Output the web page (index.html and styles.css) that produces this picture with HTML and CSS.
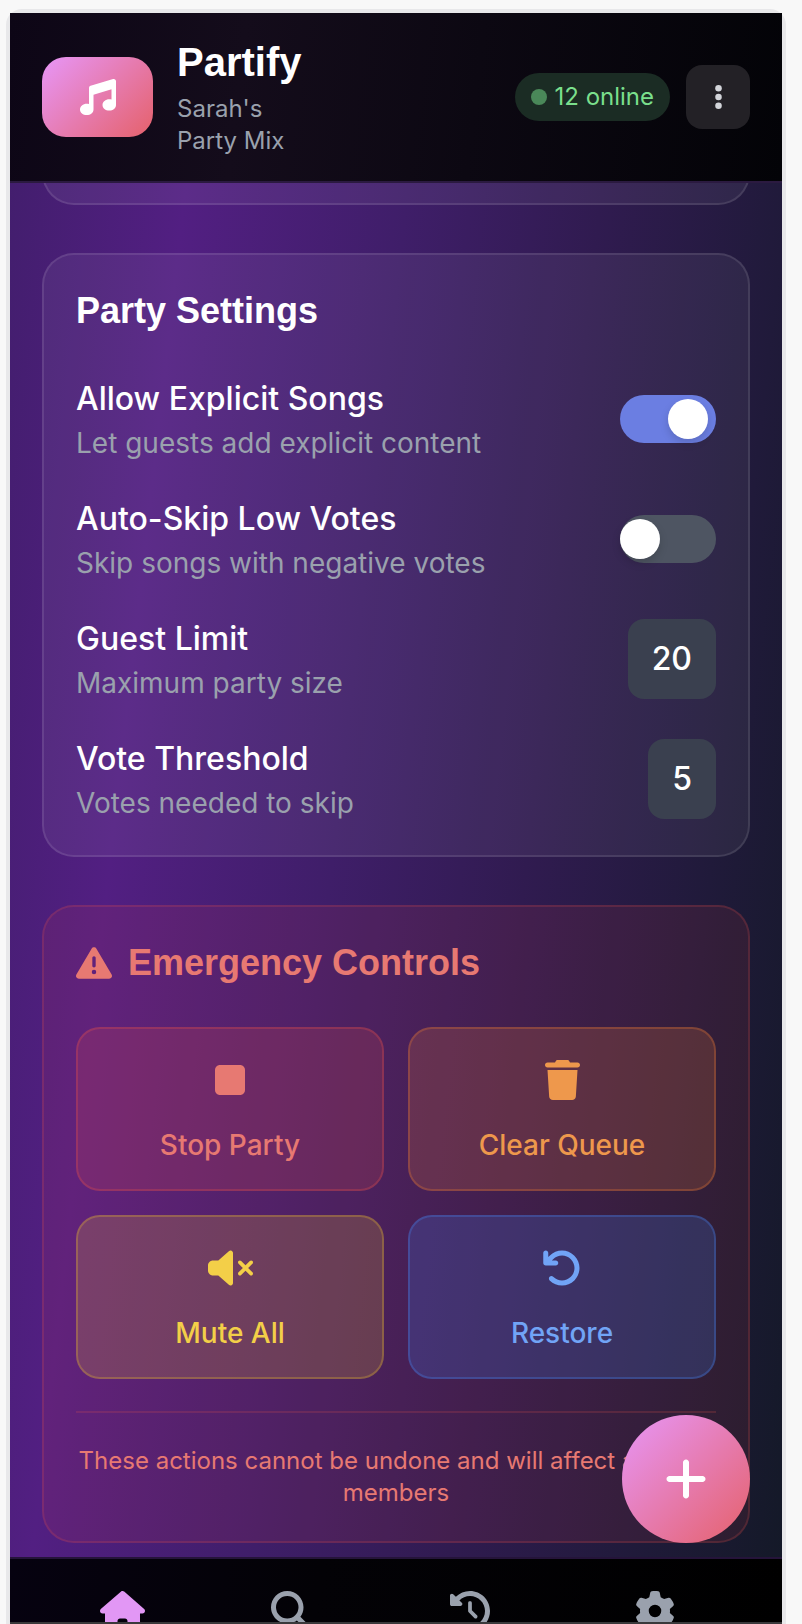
FILE: index.html
```html
<!DOCTYPE html>
<html lang="en">
<head>
<meta charset="utf-8">
<meta name="viewport" content="width=device-width, initial-scale=1">
<title>Partify</title>
<link rel="stylesheet" href="styles.css">
</head>
<body>
<div class="device">
  <div class="screen">
    <header class="header">
      <div class="logo">
        <svg class="icon-36" viewBox="0 0 512 512" aria-hidden="true"><path d="M499.100 6.300c8.100 6 12.900 15.600 12.900 25.700v72V368c0 44.200-43 80-96 80s-96-35.800-96-80s43-80 96-80c11.200 0 22 1.600 32 4.600V147L192 223.800V432c0 44.200-43 80-96 80s-96-35.800-96-80s43-80 96-80c11.200 0 22 1.600 32 4.600V200 128c0-14.100 9.300-26.600 22.800-30.700l320-96c9.700-2.900 20.200-1.100 28.300 5z"/></svg>
      </div>
      <div class="brand">
        <h1 class="brand-name">Partify</h1>
        <p class="brand-party">Sarah's Party Mix</p>
      </div>
      <div class="header-actions">
        <div class="online"><span class="online-dot"></span>12 online</div>
        <button class="menu-button" type="button" aria-label="More options">
          <svg class="icon-28" viewBox="0 0 128 512" aria-hidden="true"><circle cx="64" cy="96" r="60"/><circle cx="64" cy="256" r="60"/><circle cx="64" cy="416" r="60"/></svg>
        </button>
      </div>
    </header>

    <main class="content">
      <section class="card card-previous"></section>

      <section class="card">
        <h2 class="card-title">Party Settings</h2>
        <div class="settings">
          <div class="setting">
            <label class="setting-text" for="explicit"><span class="setting-name">Allow Explicit Songs</span><span class="setting-note">Let guests add explicit content</span></label>
            <input class="toggle" id="explicit" type="checkbox" checked>
          </div>
          <div class="setting">
            <label class="setting-text" for="autoskip"><span class="setting-name">Auto-Skip Low Votes</span><span class="setting-note">Skip songs with negative votes</span></label>
            <input class="toggle" id="autoskip" type="checkbox">
          </div>
          <div class="setting">
            <label class="setting-text" for="limit"><span class="setting-name">Guest Limit</span><span class="setting-note">Maximum party size</span></label>
            <button class="value" id="limit" type="button">20</button>
          </div>
          <div class="setting">
            <label class="setting-text" for="threshold"><span class="setting-name">Vote Threshold</span><span class="setting-note">Votes needed to skip</span></label>
            <button class="value" id="threshold" type="button">5</button>
          </div>
        </div>
      </section>

      <section class="card card-danger">
        <h2 class="card-title">
          <svg class="icon-36" viewBox="0 0 512 512" aria-hidden="true"><path d="M256 32c14.200 0 27.300 7.500 34.500 19.800l216 368c7.300 12.400 7.300 27.700 .2 40.100S486.300 480 472 480H40c-14.300 0-27.600-7.700-34.700-20.100s-7-27.800 .2-40.100l216-368C228.700 39.500 241.800 32 256 32zm0 128c-13.300 0-24 10.700-24 24V296c0 13.300 10.700 24 24 24s24-10.700 24-24V184c0-13.300-10.700-24-24-24zm32 224a32 32 0 1 0 -64 0 32 32 0 1 0 64 0z"/></svg>
          Emergency Controls
        </h2>
        <div class="actions">
          <button class="action action-stop" type="button">
            <span class="action-icon"><svg class="icon-40" viewBox="0 0 384 512" aria-hidden="true"><path d="M0 128C0 92.700 28.700 64 64 64H320c35.300 0 64 28.700 64 64V384c0 35.300-28.700 64-64 64H64c-35.300 0-64-28.700-64-64V128z"/></svg></span>
            Stop Party
          </button>
          <button class="action action-clear" type="button">
            <span class="action-icon"><svg class="icon-40" viewBox="0 0 448 512" aria-hidden="true"><path d="M135.200 17.700C140.600 6.800 151.700 0 163.800 0H284.200c12.100 0 23.200 6.800 28.600 17.700L320 32h96c17.700 0 32 14.300 32 32s-14.300 32-32 32H32C14.300 96 0 81.700 0 64S14.300 32 32 32h96l7.200-14.300zM32 128H416L394.800 467c-1.600 25.300-22.600 45-47.900 45H101.100c-25.300 0-46.300-19.700-47.900-45L32 128z"/></svg></span>
            Clear Queue
          </button>
          <button class="action action-mute" type="button">
            <span class="action-icon"><svg class="icon-40" viewBox="0 0 576 512" aria-hidden="true"><path d="M301.100 34.800C312.600 40 320 51.400 320 64V448c0 12.600-7.400 24-18.900 29.200s-25 3.100-34.400-5.300L131.800 352H64c-35.300 0-64-28.700-64-64V224c0-35.300 28.700-64 64-64h67.800L266.700 40.100c9.400-8.400 22.900-10.400 34.400-5.300zM425 167l55 55 55-55c9.400-9.400 24.600-9.400 33.900 0s9.400 24.600 0 33.900l-55 55 55 55c9.400 9.400 9.400 24.600 0 33.900s-24.600 9.400-33.900 0l-55-55-55 55c-9.400 9.400-24.600 9.400-33.900 0s-9.400-24.600 0-33.900l55-55-55-55c-9.400-9.400-9.400-24.600 0-33.900s24.600-9.400 33.900 0z"/></svg></span>
            Mute All
          </button>
          <button class="action action-restore" type="button">
            <span class="action-icon"><svg class="icon-40" viewBox="0 0 512 512" aria-hidden="true"><path d="M125.700 160H176c17.700 0 32 14.300 32 32s-14.300 32-32 32H48c-17.700 0-32-14.300-32-32V64c0-17.700 14.300-32 32-32s32 14.300 32 32v51.200L97.600 97.600c87.500-87.500 229.300-87.500 316.800 0s87.500 229.300 0 316.800s-229.300 87.500-316.800 0c-12.500-12.500-12.500-32.800 0-45.300s32.800-12.500 45.300 0c62.500 62.500 163.800 62.500 226.300 0s62.500-163.800 0-226.300s-163.800-62.500-226.300 0L125.700 160z"/></svg></span>
            Restore
          </button>
        </div>
        <p class="warning">These actions cannot be undone and will affect all party members</p>
      </section>
    </main>

    <button class="fab" type="button" aria-label="Add song">
      <svg class="icon-48" viewBox="0 0 448 512" aria-hidden="true"><path d="M256 80c0-17.700-14.300-32-32-32s-32 14.300-32 32V224H48c-17.700 0-32 14.300-32 32s14.300 32 32 32H192V432c0 17.700 14.300 32 32 32s32-14.300 32-32V288H400c17.700 0 32-14.300 32-32s-14.300-32-32-32H256V80z"/></svg>
    </button>

    <nav class="nav" aria-label="Main">
      <a class="nav-link nav-link-active" href="#home" aria-label="Home"><svg class="icon-40" viewBox="0 0 576 512" aria-hidden="true"><path d="M575.800 255.500c0 18-15 32.100-32 32.100h-32l.7 160.200c0 2.700-.2 5.400-.5 8.100V472c0 22.100-17.900 40-40 40H456c-1.100 0-2.200 0-3.300-.1c-1.400 .1-2.800 .1-4.200 .1H416 392c-22.100 0-40-17.900-40-40V448 384c0-17.700-14.300-32-32-32H256c-17.700 0-32 14.300-32 32v64 24c0 22.100-17.900 40-40 40H160 128.100c-1.500 0-3-.1-4.500-.2c-1.200 .1-2.400 .2-3.600 .2H104c-22.100 0-40-17.900-40-40V360c0-.9 0-1.900 .1-2.800V287.600H32c-18 0-32-14-32-32.100c0-9 3-17 10-24L266.400 8c7-7 15-8 22-8s15 2 21 7L564.800 231.500c8 7 12 15 11 24z"/></svg></a>
      <a class="nav-link" href="#search" aria-label="Search"><svg class="icon-40" viewBox="0 0 512 512" aria-hidden="true"><path d="M416 208c0 45.900-14.900 88.300-40 122.700L502.600 457.400c12.500 12.500 12.500 32.800 0 45.300s-32.800 12.500-45.300 0L330.700 376c-34.400 25.200-76.800 40-122.700 40C93.100 416 0 322.900 0 208S93.100 0 208 0S416 93.100 416 208zM208 352a144 144 0 1 0 0-288 144 144 0 1 0 0 288z"/></svg></a>
      <a class="nav-link" href="#history" aria-label="History"><svg class="icon-40" viewBox="0 0 512 512" aria-hidden="true"><path d="M75 75L41 41C25.900 25.900 0 36.600 0 57.900V168c0 13.300 10.700 24 24 24H134.100c21.400 0 32.100-25.900 17-41l-30.800-30.800C155 85.500 203 64 256 64c106 0 192 86 192 192s-86 192-192 192c-40.800 0-78.600-12.700-109.700-34.400c-14.500-10.100-34.400-6.600-44.600 7.900s-6.600 34.400 7.900 44.600C151.200 495 201.700 512 256 512c141.400 0 256-114.600 256-256S397.400 0 256 0C185.300 0 121.300 28.700 75 75zm181 53c-13.300 0-24 10.700-24 24V256c0 6.400 2.500 12.500 7 17l72 72c9.400 9.400 24.600 9.400 33.900 0s9.400-24.600 0-33.900l-65-65V152c0-13.300-10.700-24-24-24z"/></svg></a>
      <a class="nav-link" href="#settings" aria-label="Settings"><svg class="icon-40" viewBox="0 0 512 512" aria-hidden="true"><path d="M495.900 166.600c3.200 8.700 .5 18.400-6.400 24.600l-43.300 39.400c1.100 8.300 1.700 16.800 1.700 25.400s-.6 17.100-1.700 25.400l43.300 39.400c6.900 6.200 9.600 15.900 6.400 24.600c-4.400 11.900-9.700 23.300-15.800 34.300l-4.700 8.100c-6.600 11-14 21.400-22.100 31.200c-5.900 7.200-15.700 9.600-24.500 6.800l-55.700-17.700c-13.400 10.300-28.200 18.900-44 25.400l-12.500 57.100c-2 9.100-9 16.300-18.200 17.800c-13.800 2.300-28 3.500-42.500 3.500s-28.700-1.200-42.500-3.500c-9.200-1.500-16.200-8.700-18.200-17.800l-12.500-57.100c-15.800-6.500-30.600-15.100-44-25.400L83.100 425.900c-8.800 2.800-18.600 .3-24.500-6.800c-8.100-9.800-15.500-20.200-22.100-31.200l-4.700-8.100c-6.100-11-11.400-22.400-15.800-34.300c-3.200-8.700-.5-18.400 6.400-24.600l43.300-39.400C64.600 273.100 64 264.600 64 256s.6-17.100 1.700-25.400L22.400 191.200c-6.900-6.200-9.600-15.900-6.400-24.600c4.400-11.900 9.700-23.300 15.800-34.300l4.700-8.100c6.600-11 14-21.400 22.100-31.200c5.900-7.200 15.700-9.600 24.500-6.800l55.700 17.700c13.400-10.300 28.200-18.900 44-25.400l12.500-57.100c2-9.100 9-16.300 18.200-17.800C227.300 1.200 241.500 0 256 0s28.700 1.200 42.500 3.500c9.200 1.500 16.200 8.700 18.200 17.800l12.500 57.100c15.800 6.500 30.600 15.100 44 25.400l55.700-17.700c8.800-2.800 18.600-.3 24.500 6.800c8.100 9.800 15.500 20.200 22.100 31.200l4.700 8.100c6.100 11 11.400 22.400 15.800 34.300zM256 336a80 80 0 1 0 0-160 80 80 0 1 0 0 160z"/></svg></a>
    </nav>
  </div>
</div>
</body>
</html>
```

FILE: styles.css
```css
* { box-sizing: border-box; }

body {
  margin: 0;
  background: #f8f8f8;
  color: #fff;
  font-family: Inter, "Liberation Sans", sans-serif;
  font-size: 24px;
  line-height: 32px;
}

h1, h2, p { margin: 0; }
h1, h2 { font-family: "Liberation Sans", Arial, sans-serif; font-weight: 700; }
button { font-family: inherit; color: inherit; cursor: pointer; }
svg { display: block; fill: currentColor; }

.icon-28 { height: 28px; }
.icon-36 { height: 36px; }
.icon-40 { height: 40px; }
.icon-48 { height: 48px; }

.device {
  height: 100vh;
  padding: 9px 16px 0 6px;
  overflow: hidden;
  display: flex;
}

.screen {
  position: relative;
  flex: 1;
  min-width: 0;
  display: flex;
  flex-direction: column;
  border: 4px solid #e8e8ea;
  border-bottom: 0;
  border-radius: 16px 16px 0 0;
}

.header {
  display: flex;
  align-items: center;
  gap: 24px;
  padding: 24px 32px;
  background: linear-gradient(97deg, #0d0616, #140c1b 30%, #0c0812 60%, #030307);
  border-bottom: 2px solid #2b1a40;
}

.logo {
  flex: none;
  width: 111px;
  height: 80px;
  display: grid;
  place-items: center;
  border-radius: 24px;
  background: linear-gradient(135deg, #e796f8, #e5616a);
}

.brand { width: 128px; }

.brand-name {
  margin-bottom: 6px;
  font-size: 40px;
  line-height: 50px;
}

.brand-party { color: #9aa1ad; }

.header-actions {
  margin-left: auto;
  display: flex;
  align-items: center;
  gap: 16px;
}

.online {
  display: flex;
  align-items: center;
  gap: 7px;
  padding: 8px 16px;
  border-radius: 24px;
  background: #1b2c24;
  color: #7adf8c;
}

.online-dot {
  width: 16px;
  height: 16px;
  border-radius: 50%;
  background: #4a8859;
}

.menu-button {
  width: 64px;
  height: 64px;
  padding: 0;
  display: grid;
  place-items: center;
  border: 0;
  border-radius: 16px;
  background: #232126;
  color: #d3d5da;
}

.content {
  flex: 1;
  min-height: 0;
  overflow: hidden;
  display: flex;
  flex-direction: column;
  justify-content: flex-end;
  gap: 48px;
  padding: 0 32px 14px;
  background: linear-gradient(96.4deg, #431e6e, #521f82 19%, #3f1e69 43%, #301b50 64%, #201a3a 84%, #141928);
}

.card {
  flex: none;
  padding: 32px;
  border: 2px solid rgba(255, 255, 255, 0.1);
  border-radius: 32px;
  background: rgba(255, 255, 255, 0.06);
}

.card-previous { height: 80px; }

.card-danger {
  border-color: rgba(225, 80, 75, 0.2);
  background: rgba(239, 68, 68, 0.1);
}

.card-title {
  display: flex;
  align-items: center;
  gap: 16px;
  margin-bottom: 40px;
  font-size: 36px;
  line-height: 48px;
}

.card-danger .card-title { color: #e77972; }

.settings {
  display: flex;
  flex-direction: column;
  gap: 32px;
}

.setting {
  display: flex;
  align-items: center;
  justify-content: space-between;
}

.setting-text {
  display: flex;
  flex-direction: column;
}

.setting-name {
  font-size: 32px;
  line-height: 48px;
  font-weight: 500;
}

.setting-note {
  font-size: 28px;
  line-height: 40px;
  color: #9aa1ad;
}

.toggle {
  appearance: none;
  width: 96px;
  height: 48px;
  margin: 0;
  padding: 4px 0;
  border-radius: 24px;
  background: #4e5562;
  cursor: pointer;
}

.toggle::before {
  content: "";
  display: block;
  width: 40px;
  height: 40px;
  border-radius: 50%;
  background: #fff;
  box-shadow: 0 4px 8px rgba(0, 0, 0, 0.15);
}

.toggle:checked {
  padding-left: 48px;
  background: #6b7ee2;
}

.value {
  padding: 16px 24px;
  border: 0;
  border-radius: 16px;
  background: #3a404f;
  font-size: 32px;
  line-height: 48px;
  font-weight: 500;
}

.actions {
  display: grid;
  grid-template-columns: 1fr 1fr;
  gap: 24px;
}

.action {
  padding: 24px;
  border: 2px solid;
  border-radius: 24px;
  font-size: 28px;
  line-height: 40px;
  font-weight: 500;
}

.action-icon {
  height: 54px;
  margin-bottom: 18px;
  display: grid;
  place-items: center;
}

.action-stop {
  color: #e77972;
  border-color: rgba(225, 80, 75, 0.3);
  background: rgba(225, 80, 75, 0.18);
}

.action-clear {
  color: #ee984c;
  border-color: rgba(230, 120, 50, 0.3);
  background: rgba(225, 118, 58, 0.2);
}

.action-mute {
  color: #f3cf48;
  border-color: rgba(225, 179, 50, 0.3);
  background: rgba(225, 179, 50, 0.2);
}

.action-restore {
  color: #71a4f6;
  border-color: rgba(70, 130, 240, 0.3);
  background: rgba(65, 130, 240, 0.2);
}

.warning {
  margin-top: 32px;
  padding-top: 32px;
  border-top: 2px solid rgba(225, 80, 75, 0.2);
  color: #e77972;
  text-align: center;
}

.fab {
  position: absolute;
  right: 32px;
  bottom: 81px;
  width: 128px;
  height: 128px;
  padding: 0;
  display: grid;
  place-items: center;
  border: 0;
  border-radius: 50%;
  background: linear-gradient(135deg, #e796f8, #e5616a);
}

.nav {
  display: grid;
  grid-template-columns: 160fr 177fr 181fr 190fr;
  height: 67px;
  padding: 32px 32px 0;
  overflow: hidden;
  border-top: 2px solid #25143a;
  border-bottom: 2px solid #39393b;
  background: linear-gradient(97deg, #060210, #030206 40%, #000);
}

.nav-link {
  display: flex;
  justify-content: center;
  color: #9aa1ad;
}

.nav-link-active { color: #e297f5; }
```
